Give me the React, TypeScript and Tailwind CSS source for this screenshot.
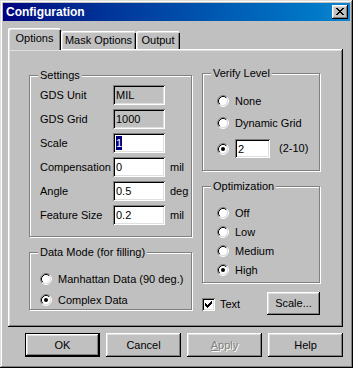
import React from "react";

const RAISED =
  "shadow-[inset_-1px_-1px_0_#000,inset_1px_1px_0_#fff,inset_-2px_-2px_0_#808080,inset_2px_2px_0_#dfdfdf]";
const SUNKEN =
  "shadow-[inset_1px_1px_0_#808080,inset_-1px_-1px_0_#fff,inset_2px_2px_0_#000,inset_-2px_-2px_0_#dfdfdf]";
const ETCHED =
  "border border-[#808080] shadow-[inset_1px_1px_0_#fff,1px_1px_0_#fff]";

function Radio({ checked }: { checked?: boolean }) {
  return (
    <svg width="12" height="12" viewBox="0 0 12 12" className="shrink-0">
      <circle cx="6" cy="6" r="4.5" fill="#fff" />
      <path d="M2.11 9.89 A5.5 5.5 0 0 1 9.89 2.11" stroke="#808080" fill="none" />
      <path d="M9.89 2.11 A5.5 5.5 0 0 1 2.11 9.89" stroke="#fff" fill="none" />
      <path d="M2.82 9.18 A4.5 4.5 0 0 1 9.18 2.82" stroke="#000" fill="none" />
      <path d="M9.18 2.82 A4.5 4.5 0 0 1 2.82 9.18" stroke="#dfdfdf" fill="none" />
      {checked && <circle cx="6" cy="6" r="2" fill="#000" />}
    </svg>
  );
}

function Check() {
  const cols = [2, 3, 4, 3, 2, 1, 0];
  return (
    <div className={`w-[13px] h-[13px] bg-white ${SUNKEN} relative shrink-0`}>
      <svg width="13" height="13" viewBox="0 0 13 13" className="absolute left-0 top-0">
        {cols.map((r, i) => (
          <rect key={i} x={3 + i} y={3 + r} width="1" height="3" fill="#000" />
        ))}
      </svg>
    </div>
  );
}

function CloseX() {
  const rows: [number, number][][] = [
    [[0, 2], [6, 2]],
    [[1, 2], [5, 2]],
    [[2, 4]],
    [[3, 2]],
    [[2, 4]],
    [[1, 2], [5, 2]],
    [[0, 2], [6, 2]],
  ];
  return (
    <div className={`w-[16px] h-[14px] bg-[#c0c0c0] ${RAISED} relative`}>
      <svg width="16" height="14" viewBox="0 0 16 14" className="absolute left-0 top-0">
        {rows.map((segs, y) =>
          segs.map(([x, w], k) => (
            <rect key={`${y}-${k}`} x={4 + x} y={3 + y} width={w} height="1" fill="#000" />
          ))
        )}
      </svg>
    </div>
  );
}

function Group({
  label,
  className,
  children,
}: {
  label: string;
  className?: string;
  children: React.ReactNode;
}) {
  return (
    <div className={`relative ${ETCHED} ${className ?? ""}`}>
      <span className="absolute left-[8px] top-[-8px] px-[2px] bg-[#c0c0c0] leading-[14px]">
        {label}
      </span>
      {children}
    </div>
  );
}

function Field({
  value,
  disabled,
  selected,
  w = 52,
  h = 20,
}: {
  value: string;
  disabled?: boolean;
  selected?: boolean;
  w?: number;
  h?: number;
}) {
  return (
    <div
      className={`${SUNKEN} ${disabled ? "bg-[#c0c0c0]" : "bg-white"} flex items-center pl-[3px] shrink-0`}
      style={{ width: w, height: h }}
    >
      {selected ? (
        <span className="bg-[#000080] text-white leading-[14px]">{value}</span>
      ) : (
        <span className="leading-[14px]">{value}</span>
      )}
    </div>
  );
}

function SettingRow({
  label,
  children,
  unit,
}: {
  label: string;
  children: React.ReactNode;
  unit?: string;
}) {
  return (
    <div className="flex items-center h-[20px]">
      <span className="w-[73px]">{label}</span>
      {children}
      {unit && <span className="ml-[5px]">{unit}</span>}
    </div>
  );
}

function RadioRow({ label, checked }: { label: string; checked?: boolean }) {
  return (
    <div className="flex items-center h-[16px] gap-[6px]">
      <Radio checked={checked} />
      <span>{label}</span>
    </div>
  );
}

function Btn({
  children,
  w,
  h,
  def,
}: {
  children: React.ReactNode;
  w: number;
  h: number;
  def?: boolean;
}) {
  return (
    <div
      className={`${def ? "border border-black" : ""} bg-[#c0c0c0] flex`}
      style={{ width: w, height: h }}
    >
      <div className={`flex-1 flex items-center justify-center ${RAISED}`}>{children}</div>
    </div>
  );
}

export default function App() {
  return (
    <div className="w-[353px] h-[368px] bg-[#c0c0c0] p-[3px] flex flex-col text-[11px] text-black font-['Liberation_Sans',Arial,sans-serif] shadow-[inset_-1px_-1px_0_#000,inset_1px_1px_0_#dfdfdf,inset_-2px_-2px_0_#808080,inset_2px_2px_0_#fff]">
      {/* Title bar */}
      <div className="h-[18px] flex items-center bg-gradient-to-r from-[#000080] to-[#1084d0] pl-[3px] pr-[2px]">
        <span className="flex-1 text-white font-bold text-[12px] leading-none">Configuration</span>
        <CloseX />
      </div>

      <div className="flex flex-col pl-[5px] pr-[7px] pt-[7px]">
        {/* Tabs */}
        <div className="flex items-end h-[21px] relative z-10">
          <div className="w-[53px] h-[22px] -mb-px bg-[#c0c0c0] rounded-t-[2px] flex items-center justify-center pb-[1px] shadow-[inset_1px_1px_0_#fff,inset_2px_2px_0_#dfdfdf,inset_-1px_0_0_#000,inset_-2px_0_0_#808080]">
            Options
          </div>
          <div className="w-[75px] h-[18px] bg-[#c0c0c0] rounded-t-[2px] flex items-center justify-center shadow-[inset_1px_1px_0_#fff,inset_2px_2px_0_#dfdfdf,inset_-1px_0_0_#000,inset_-2px_0_0_#808080]">
            Mask Options
          </div>
          <div className="w-[44px] h-[18px] bg-[#c0c0c0] rounded-t-[2px] flex items-center justify-center shadow-[inset_1px_1px_0_#fff,inset_2px_2px_0_#dfdfdf,inset_-1px_0_0_#000,inset_-2px_0_0_#808080]">
            Output
          </div>
        </div>

        {/* Panel */}
        <div className={`h-[278px] ${RAISED} flex pl-[21px] gap-[10px]`}>
          {/* Left column */}
          <div className="w-[163px] flex flex-col pt-[26px] gap-[15px]">
            <Group label="Settings" className="h-[162px] flex flex-col pt-[9px] pl-[10px] gap-[4px]">
              <SettingRow label="GDS Unit">
                <Field value="MIL" disabled />
              </SettingRow>
              <SettingRow label="GDS Grid">
                <Field value="1000" disabled />
              </SettingRow>
              <SettingRow label="Scale">
                <Field value="1" selected />
              </SettingRow>
              <SettingRow label="Compensation" unit="mil">
                <Field value="0" />
              </SettingRow>
              <SettingRow label="Angle" unit="deg">
                <Field value="0.5" />
              </SettingRow>
              <SettingRow label="Feature Size" unit="mil">
                <Field value="0.2" />
              </SettingRow>
            </Group>
            <Group label="Data Mode (for filling)" className="h-[58px] flex flex-col pt-[18px] pl-[10px] gap-[5px]">
              <RadioRow label="Manhattan Data (90 deg.)" />
              <RadioRow label="Complex Data" checked />
            </Group>
          </div>

          {/* Right column */}
          <div className="w-[118px] flex flex-col pt-[24px]">
            <Group label="Verify Level" className="h-[98px] flex flex-col pt-[19px] pl-[14px]">
              <RadioRow label="None" />
              <div className="mt-[6px]">
                <RadioRow label="Dynamic Grid" />
              </div>
              <div className="mt-[8px] flex items-center h-[19px] gap-[6px]">
                <Radio checked />
                <Field value="2" w={35} h={19} />
                <span className="ml-[3px]">(2-10)</span>
              </div>
            </Group>
            <Group label="Optimization" className="h-[97px] mt-[15px] flex flex-col pt-[18px] pl-[14px] gap-[3px]">
              <RadioRow label="Off" />
              <RadioRow label="Low" />
              <RadioRow label="Medium" />
              <RadioRow label="High" checked />
            </Group>
            <div className="mt-[9px] h-[23px] flex items-center justify-between">
              <div className="flex items-center gap-[5px] mt-[2px]">
                <Check />
                <span>Text</span>
              </div>
              <Btn w={53} h={23}>
                Scale...
              </Btn>
            </div>
          </div>
        </div>

        {/* Buttons */}
        <div className="mt-[6px] flex justify-end gap-[6px]">
          <Btn w={75} h={24} def>
            OK
          </Btn>
          <Btn w={75} h={24}>
            Cancel
          </Btn>
          <Btn w={75} h={24}>
            <span className="text-[#808080] [text-shadow:1px_1px_0_#fff]">
              <span className="underline">A</span>pply
            </span>
          </Btn>
          <Btn w={75} h={24}>
            Help
          </Btn>
        </div>
      </div>
    </div>
  );
}
